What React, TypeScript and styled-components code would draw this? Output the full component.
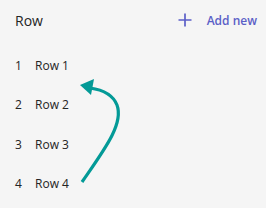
import React from "react";
import styled, { createGlobalStyle } from "styled-components";

const Global = createGlobalStyle`
  html, body { margin: 0; padding: 0; background: #f5f5f5; }
  body { font-family: "Segoe UI", "Open Sans", "Noto Sans", sans-serif; color: #242424; }
`;

const Panel = styled.div`
  position: relative;
  width: 266px;
  height: 208px;
  background: #f5f5f5;
  box-sizing: border-box;
  padding: 10px 9px 0 15px;
`;

const Header = styled.div`
  display: flex;
  align-items: center;
  justify-content: space-between;
  height: 20px;
`;

const Title = styled.div`
  font-size: 14px;
  font-weight: 400;
  color: #242424;
`;

const AddButton = styled.button`
  display: flex;
  align-items: center;
  gap: 15px;
  border: none;
  background: none;
  padding: 0;
  color: #5b5fc7;
  font-family: inherit;
  font-size: 12px;
  font-weight: 600;
`;

const List = styled.div`
  display: flex;
  flex-direction: column;
  margin-top: 27px;
  gap: 23.5px;
`;

const Row = styled.div`
  display: flex;
  align-items: center;
  height: 16px;
  font-size: 12px;
`;

const Num = styled.span`
  width: 20px;
  color: #242424;
`;

const Label = styled.span`
  color: #242424;
`;

const Arrow = styled.svg`
  position: absolute;
  left: 0;
  top: 0;
  pointer-events: none;
`;

export default function App() {
  return (
    <>
      <Global />
      <Panel>
        <Header>
          <Title>Row</Title>
          <AddButton>
            <svg width="14" height="14" viewBox="0 0 14 14">
              <path d="M7 0.5V13.5M0.5 7H13.5" stroke="#5b5fc7" strokeWidth="1.7" fill="none" />
            </svg>
            Add new
          </AddButton>
        </Header>
        <List>
          {[1, 2, 3, 4].map((n) => (
            <Row key={n}>
              <Num>{n}</Num>
              <Label>Row {n}</Label>
            </Row>
          ))}
        </List>
        <Arrow width="266" height="208" viewBox="0 0 266 208">
          <path
            d="M82 182 C104 150 124 124 117 105 C113 95 104 90 90 88"
            stroke="#039a97"
            strokeWidth="3.2"
            fill="none"
          />
          <polygon points="80,85 94,79 91,95" fill="#039a97" />
        </Arrow>
      </Panel>
    </>
  );
}
